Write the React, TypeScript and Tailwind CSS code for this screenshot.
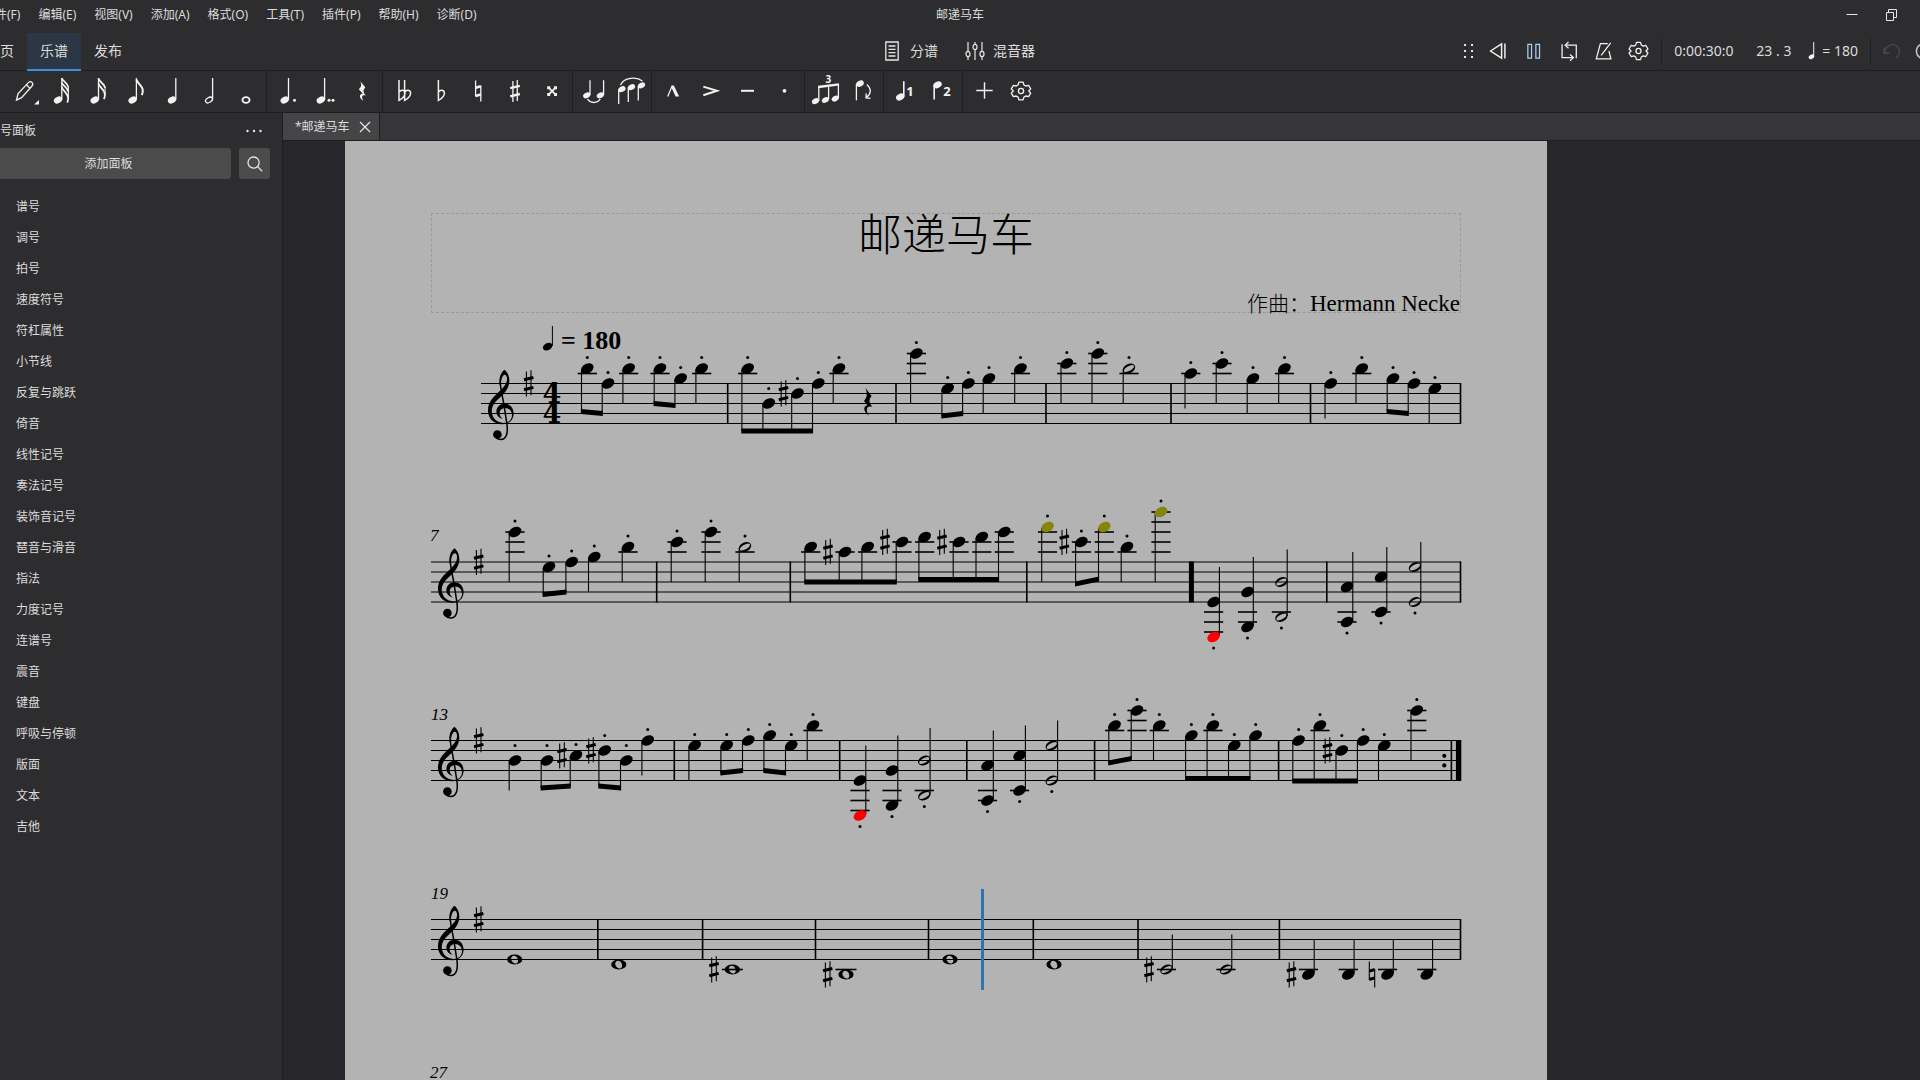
import type { ReactNode } from "react";
import clsx from "clsx";

const menus = [
  "件(F)",
  "编辑(E)",
  "视图(V)",
  "添加(A)",
  "格式(O)",
  "工具(T)",
  "插件(P)",
  "帮助(H)",
  "诊断(D)",
];

const palettes = [
  "谱号",
  "调号",
  "拍号",
  "速度符号",
  "符杠属性",
  "小节线",
  "反复与跳跃",
  "倚音",
  "线性记号",
  "奏法记号",
  "装饰音记号",
  "琶音与滑音",
  "指法",
  "力度记号",
  "连谱号",
  "震音",
  "键盘",
  "呼吸与停顿",
  "版面",
  "文本",
  "吉他",
];

/* ---------- toolbar icons, all on a 36x36 grid ---------- */

function Icon({ children }: { children: ReactNode }) {
  return (
    <svg
      viewBox="0 0 36 36"
      className="size-9"
      fill="none"
      stroke="#f2f2f2"
      strokeWidth="1.3"
      aria-hidden="true"
    >
      {children}
    </svg>
  );
}

function Blob({ x, y, r = 4.4 }: { x: number; y: number; r?: number }) {
  return (
    <ellipse
      cx={x}
      cy={y}
      rx={r}
      ry={r * 0.72}
      transform={`rotate(-28 ${x} ${y})`}
      fill="#f2f2f2"
      stroke="none"
    />
  );
}

// Closing flag of a stem; shorter ones are stacked above it.
const flag = (x: number, y: number) =>
  `M${x} ${y}c.6 3.6 6.2 6 6.4 11 0 1.800-.4 3.400-1 4.600`;

const shortFlag = (x: number, y: number) => `M${x} ${y}c.6 3.200 5.600 4.600 6.600 9.400`;

const flat = (x: number) =>
  `M${x} 7v20.4c4-2.2 6-4.4 6-7.2 0-3.6-4-4-6-1.2`;

const GEAR =
  "M15.9 9.100h4.2l.8 2.8 1.9 1.1 2.8-.7 2.1 3.6-2 2.100 2 2.100-2.1 3.6-2.8-.7-1.9 1.1-.8 2.8h-4.2l-.8-2.8-1.9-1.1-2.8.7-2.1-3.6 2-2.100-2-2.100 2.1-3.6 2.8.7 1.9-1.1z";

const gear = (
  <Icon>
    <path d={GEAR} strokeLinejoin="round" />
    <circle cx="18" cy="18" r="2.6" />
  </Icon>
);

const toolGroups: { label: string; icon: ReactNode }[][] = [
  [
    {
      label: "输入",
      icon: (
        <Icon>
          <path d="M10.5 27l1.6-6.4L22.4 9.6c1.2-1.2 2.6-1.2 3.6-.2s1 2.6-.2 3.8L15.6 24.6zM20.4 11.8l3.6 3.6" />
          <path d="M28 31.5h5v-4.5z" fill="#f2f2f2" stroke="none" />
        </Icon>
      ),
    },
    {
      label: "32分音符",
      icon: (
        <Icon>
          <Blob x={15} y={27} />
          <path d="M18.8 5v21.5" />
          <path d={`${shortFlag(18.8, 5)}${shortFlag(18.8, 9.5)}${flag(18.8, 14)}`} strokeWidth="1.7" />
          <path d="M25.4 13.5v13" strokeWidth="1" />
        </Icon>
      ),
    },
    {
      label: "16分音符",
      icon: (
        <Icon>
          <Blob x={14.7} y={27} />
          <path d="M18.5 5v21.5" />
          <path d={`${shortFlag(18.5, 5.5)}${flag(18.5, 10.5)}`} strokeWidth="1.8" />
          <path d="M25.1 14v8" strokeWidth="1" />
        </Icon>
      ),
    },
    {
      label: "8分音符",
      icon: (
        <Icon>
          <Blob x={15.6} y={27} />
          <path d="M19.4 5v21.5" />
          <path d={flag(19.4, 6.5)} strokeWidth="2" />
        </Icon>
      ),
    },
    {
      label: "4分音符",
      icon: (
        <Icon>
          <Blob x={18} y={27} />
          <path d="M21.8 5v21.5" />
        </Icon>
      ),
    },
    {
      label: "2分音符",
      icon: (
        <Icon>
          <ellipse cx="18" cy="27" rx="3.8" ry="2.4" transform="rotate(-32 18 27)" />
          <path d="M21.6 5v20.8" />
        </Icon>
      ),
    },
    {
      label: "全音符",
      icon: (
        <Icon>
          <ellipse cx="18" cy="27" rx="3.6" ry="2.8" strokeWidth="1.8" />
        </Icon>
      ),
    },
  ],
  [
    {
      label: "附点",
      icon: (
        <Icon>
          <Blob x={14.7} y={27} />
          <path d="M18.5 5v21.5" />
          <circle cx="24.5" cy="27.3" r="1.5" fill="#f2f2f2" stroke="none" />
        </Icon>
      ),
    },
    {
      label: "双附点",
      icon: (
        <Icon>
          <Blob x={13.8} y={27} />
          <path d="M17.6 5v21.5" />
          <circle cx="22" cy="27.3" r="1.5" fill="#f2f2f2" stroke="none" />
          <circle cx="26" cy="27.3" r="1.5" fill="#f2f2f2" stroke="none" />
        </Icon>
      ),
    },
    {
      label: "休止符",
      icon: (
        <Icon>
          <path
            d="M16.2 8l5.2 6.4c-2.6 2.4-2.6 4.6.4 8-3.4-1-5 1-2.4 5.4-4.6-2.6-4.4-6.8-.6-7l-4-4.6c2.8-2.6 3-4.4 1.4-8.2z"
            fill="#f2f2f2"
            stroke="none"
          />
        </Icon>
      ),
    },
  ],
  [
    {
      label: "重降号",
      icon: (
        <Icon>
          <path d={`${flat(13)}${flat(18.6)}`} strokeWidth="1.5" />
        </Icon>
      ),
    },
    {
      label: "降号",
      icon: (
        <Icon>
          <path d={flat(15.4)} strokeWidth="1.5" />
        </Icon>
      ),
    },
    {
      label: "还原号",
      icon: (
        <Icon>
          <path d="M15.6 7.5v16M20.8 12.6v16" />
          <path d="M15.6 14.8l5.2-1.6M15.6 23l5.2-1.6" strokeWidth="2.6" />
        </Icon>
      ),
    },
    {
      label: "升号",
      icon: (
        <Icon>
          <path d="M15.9 8v21M20.3 7v21" />
          <path d="M13.2 15.2l9.6-2.4M13.2 23.4l9.6-2.4" strokeWidth="2.4" />
        </Icon>
      ),
    },
    {
      label: "重升号",
      icon: (
        <Icon>
          <path d="M14.4 14.4l7.4 7.4M21.8 14.4l-7.4 7.4" strokeWidth="1.8" />
          <path d="M13.2 13.2h3v3h-3zM20 13.2h3v3h-3zM13.2 20h3v3h-3zM20 20h3v3h-3z" fill="#f2f2f2" stroke="none" />
        </Icon>
      ),
    },
  ],
  [
    {
      label: "延音线",
      icon: (
        <Icon>
          <Blob x={10.7} y={22.3} r={3.8} />
          <Blob x={24.3} y={22.3} r={3.8} />
          <path d="M14 7.3v14.6M27.6 7.3v14.6" />
          <path d="M11.5 26.2c3 4.4 9.6 4.4 12.8 0" />
        </Icon>
      ),
    },
    {
      label: "连音线",
      icon: (
        <Icon>
          <Blob x={8.9} y={16.2} r={3.8} />
          <Blob x={18.5} y={14.2} r={3.8} />
          <Blob x={28.5} y={12.4} r={3.8} />
          <path d="M5.7 16.5V31M15.3 14.5V29M25.3 13v14.5" />
          <path d="M7.5 12C11 4.4 23.5 3.4 29.4 8" />
        </Icon>
      ),
    },
  ],
  [
    {
      label: "强音",
      icon: (
        <Icon>
          <path d="M12 23.4l4.6-10.8h2.2l5.4 10.8h-3.6l-3.8-8.2-3.4 8.2z" fill="#f2f2f2" stroke="none" />
        </Icon>
      ),
    },
    {
      label: "重音",
      icon: (
        <Icon>
          <path d="M11.3 13.6L25 17.8l-13.7 4.4" strokeWidth="2" />
        </Icon>
      ),
    },
    {
      label: "保持音",
      icon: (
        <Icon>
          <path d="M12 17.8h13" strokeWidth="2" />
        </Icon>
      ),
    },
    {
      label: "跳音",
      icon: (
        <Icon>
          <circle cx="18.500" cy="17.8" r="1.900" fill="#f2f2f2" stroke="none" />
        </Icon>
      ),
    },
  ],
  [
    {
      label: "连音符",
      icon: (
        <Icon>
          <Blob x={7.4} y={28.2} r={3.7} />
          <Blob x={17.3} y={27} r={3.7} />
          <Blob x={27.2} y={25.6} r={3.7} />
          <path d="M10.8 13.5v14.4M20.6 13v13.6M30.4 11v14.2" />
          <path d="M10.2 14l20.8-2.6" strokeWidth="2.4" />
          <text
            x="20.4"
            y="10"
            textAnchor="middle"
            className="font-['Noto_Sans'] text-[10px] font-bold"
            fill="#f2f2f2"
            stroke="none"
          >
            3
          </text>
        </Icon>
      ),
    },
    {
      label: "翻转方向",
      icon: (
        <Icon>
          <Blob x={15} y={10.6} r={4} />
          <path d="M11.4 11v16.4" />
          <path d="M21.8 11.4c4.8 4 4.6 9.2-.4 13.2M25.6 25.4l-4.6-.4.2-4.6" />
        </Icon>
      ),
    },
  ],
  [
    {
      label: "声部 1",
      icon: (
        <Icon>
          <Blob x={13.2} y={24} />
          <path d="M16.8 8.3v15.4" strokeWidth="1.6" />
          <text x="23" y="22.6" textAnchor="middle" className="font-['Noto_Sans'] text-[13px] font-bold" fill="#f2f2f2" stroke="none">
            1
          </text>
        </Icon>
      ),
    },
    {
      label: "声部 2",
      icon: (
        <Icon>
          <Blob x={13.6} y={11.8} />
          <path d="M10.2 12v14.6" strokeWidth="1.6" />
          <text x="23" y="22.6" textAnchor="middle" className="font-['Noto_Sans'] text-[13px] font-bold" fill="#f2f2f2" stroke="none">
            2
          </text>
        </Icon>
      ),
    },
  ],
  [
    {
      label: "添加",
      icon: (
        <Icon>
          <path d="M10.300 17.500h16.4M18.5 9.300v16.4" strokeWidth="1.4" />
        </Icon>
      ),
    },
    { label: "自定义工具栏", icon: gear },
  ],
];

const playback = [
  {
    label: "回到开头",
    icon: (
      <Icon>
        <path d="M9.8 18l11.4-7.4v14.8zM24.6 10.4v15.2" strokeWidth="1.5" />
      </Icon>
    ),
  },
  {
    label: "暂停",
    icon: (
      <Icon>
        <path d="M12.2 11.2h3.8v14.2h-3.8zM20.4 11.2h3.8v14.2h-3.8z" stroke="#a9cdec" />
      </Icon>
    ),
  },
  {
    label: "循环播放",
    icon: (
      <Icon>
        <path d="M11.400 11v13.800h11.4M15.4 12h10.600v13.400" />
        <path d="M18 8.8L14.6 12l3.4 3.2M19.6 21.6l3.4 3.2-3.4 3.2" />
      </Icon>
    ),
  },
  {
    label: "节拍器",
    icon: (
      <Icon>
        <path d="M22.4 10.4h-7.6L10.6 26h15l-2-8M15.6 22.4L25.4 9.6" />
      </Icon>
    ),
  },
  { label: "播放设置", icon: gear },
];

/* ---------- score data ---------- */

// A step counts half spaces down from the top staff line.
type Tone = [x: number, step: number];
type Beam = { from: number; to: number; tones: Tone[]; plain?: boolean };
type System = {
  number?: number;
  numberX: number;
  left: number;
  top: number;
  bars: number[];
  beams: Beam[];
  quarters: Tone[];
  halves: Tone[];
  wholes?: Tone[];
  chords?: { x: number; steps: [number, number]; half?: boolean }[];
  sharps: Tone[];
  naturals?: Tone[];
  plain?: boolean;
};

const RIGHT = 1461;

const systems: System[] = [
  {
    numberX: 431,
    left: 481,
    top: 383.5,
    bars: [727.7, 896, 1046, 1171, 1310.5, 1460.5],
    beams: [
      { from: 28, to: 30, tones: [[587.3, -3], [608, 0]] },
      { from: 20, to: 22, tones: [[660, -3], [680.7, -1]] },
      { from: 47.5, to: 47.5, tones: [[747.7, -3], [768.7, 4], [797.5, 2], [818.3, 0]] },
      { from: 32.5, to: 30, tones: [[947.7, 1], [968.4, 0]] },
      { from: 28, to: 30, tones: [[1393, -1], [1414, 0]] },
    ],
    quarters: [
      [628.7, -3], [701.7, -3], [839, -3], [916.4, -6], [989, -1], [1020.5, -3],
      [1066.8, -4], [1097.8, -6], [1190.8, -2], [1222, -4], [1253, -1], [1284.5, -3],
      [1330.8, 0], [1361.8, -3], [1435, 1],
    ],
    halves: [[1129, -3]],
    sharps: [[783.5, 2]],
  },
  {
    number: 7,
    numberX: 430,
    left: 431,
    top: 562,
    bars: [656.7, 790.3, 1026.8, 1326.8, 1460.5],
    beams: [
      { from: 32.5, to: 30, tones: [[549, 1], [571.7, 0]] },
      { from: 20, to: 20, tones: [[810.7, -3], [845, -2], [867.7, -3], [902, -4]], plain: true },
      { from: 17.5, to: 17.5, tones: [[924.7, -5], [959, -4], [981.8, -5], [1004.3, -6]], plain: true },
      { from: 22, to: 17, tones: [[1081.4, -4], [1104.3, -7]] },
    ],
    quarters: [
      [515, -6], [594.3, -1], [628, -3], [677, -4], [711, -6], [1047.5, -7], [1127, -3], [1161, -10],
    ],
    halves: [[745, -3]],
    chords: [
      { x: 1213.6, steps: [8, 15] },
      { x: 1247.5, steps: [6, 13] },
      { x: 1281.4, steps: [4, 11], half: true },
      { x: 1347, steps: [5, 12] },
      { x: 1381, steps: [3, 10] },
      { x: 1415, steps: [1, 8], half: true },
    ],
    sharps: [[828, -2], [885, -4], [942, -4], [1064.3, -4]],
  },
  {
    number: 13,
    numberX: 431,
    left: 431,
    top: 740.5,
    bars: [674.3, 839.7, 966.8, 1094.6, 1278.6],
    beams: [
      { from: 47.5, to: 45.5, tones: [[547, 4], [576, 3]] },
      { from: 45.5, to: 47.5, tones: [[604.7, 2], [626.3, 4]] },
      { from: 32.5, to: 30, tones: [[726.7, 1], [748.3, 0]] },
      { from: 30, to: 32.5, tones: [[769.7, -1], [791.3, 1]] },
      { from: 22.5, to: 18, tones: [[1114.6, -3], [1137, -6]] },
      { from: 38, to: 38, tones: [[1191.4, -1], [1212.9, -3], [1234.3, 1], [1255.7, -1]] },
      { from: 40.5, to: 40.5, tones: [[1298.6, 0], [1320, -3], [1341.8, 2], [1363.2, 0]] },
    ],
    quarters: [[515, 4], [647.7, 0], [694.7, 1], [813, -3], [1159.3, -3], [1384.3, 1], [1416.8, -6]],
    halves: [],
    chords: [
      { x: 860, steps: [8, 15] },
      { x: 892, steps: [6, 13] },
      { x: 924.3, steps: [4, 11], half: true },
      { x: 987.5, steps: [5, 12] },
      { x: 1019.6, steps: [3, 10] },
      { x: 1051.8, steps: [1, 8], half: true },
    ],
    sharps: [[562, 3], [591, 2], [1327.5, 2]],
  },
  {
    number: 19,
    numberX: 431,
    left: 431,
    top: 919.5,
    bars: [597.8, 702.6, 815.5, 928.5, 1033.3, 1138, 1279.4, 1460.5],
    beams: [],
    quarters: [[1308.4, 11], [1348.3, 11], [1387.5, 11], [1426.8, 11]],
    halves: [[1166.5, 10], [1226, 10]],
    wholes: [[514.7, 8], [618.8, 9], [732.4, 10], [846, 11], [950, 8], [1054, 9]],
    sharps: [[714, 10], [827.7, 11], [1149, 10], [1291.5, 11]],
    naturals: [[1372, 11]],
    plain: true,
  },
];

// Out of a player's comfortable range is olive, out of any range is red.
function toneColor(step: number) {
  if (step >= 15) return "#ff0000";
  if (step <= -7) return "#85850a";
  return "#000";
}

function Head({ x, y, color = "#000" }: { x: number; y: number; color?: string }) {
  return <ellipse cx={x} cy={y} rx={6.7} ry={4.7} transform={`rotate(-28 ${x} ${y})`} fill={color} />;
}

function HalfHead({ x, y }: { x: number; y: number }) {
  return (
    <path
      fillRule="evenodd"
      transform={`translate(${x} ${y}) rotate(-28)`}
      d="M-6.6 0a6.6 4.6 0 1 0 13.2 0a6.6 4.6 0 1 0-13.2 0zM-5.6.3a5.6 2.3 0 1 1 11.2-.6a5.6 2.3 0 1 1-11.2.6z"
    />
  );
}

function WholeHead({ x, y }: { x: number; y: number }) {
  return (
    <path
      fillRule="evenodd"
      transform={`translate(${x} ${y})`}
      d="M-7.6 0a7.6 5 0 1 0 15.2 0a7.6 5 0 1 0-15.2 0zM-3-2.6c1.6-2.2 5-1 6 1.8.9 2.4.2 4.2-1.4 4.7-2 .5-4.3-1.2-5-3.4-.4-1.2-.2-2.3.4-3.1z"
    />
  );
}

function Sharp({ x, y }: { x: number; y: number }) {
  return (
    <g transform={`translate(${x} ${y})`} stroke="#000">
      <path d="M-2.3-12v25M2.3-13.2v25" strokeWidth="1.1" />
      <path d="M-4.7-3.7l9.4-2.3M-4.7 6.2l9.4-2.3" strokeWidth="3" />
    </g>
  );
}

function Natural({ x, y }: { x: number; y: number }) {
  return (
    <g transform={`translate(${x} ${y})`} stroke="#000">
      <path d="M-2.7-13v18.6M2.7-5.6v18.6" strokeWidth="1.1" />
      <path d="M-2.7-3.4l5.4-1.6M-2.7 5l5.4-1.6" strokeWidth="3" />
    </g>
  );
}

function Ledgers({ x, y, step, wide }: { x: number; y: number; step: number; wide?: boolean }) {
  const lines: number[] = [];
  for (let s = -2; s >= step; s -= 2) lines.push(s);
  for (let s = 10; s <= step; s += 2) lines.push(s);
  const half = wide ? 10.5 : 9.6;
  return (
    <>
      {lines.map((s) => (
        <path key={s} d={`M${x - half} ${y + s * 5}h${half * 2}`} stroke="#000" strokeWidth="1.6" />
      ))}
    </>
  );
}

function Dot({ x, y }: { x: number; y: number }) {
  return <circle cx={x} cy={y} r="1.5" />;
}

function Staccato({ x, y, step }: { x: number; y: number; step: number }) {
  const inSpace = step >= 2 && step % 2 === 0;
  return <Dot x={x} y={y + step * 5 - (inSpace ? 15 : 11)} />;
}

function Clef({ x, y }: { x: number; y: number }) {
  return (
    <g transform={`translate(${x} ${y})`}>
      <path d="M23.5-13.7C26.6-11 28.6-7 28.3-2 27.8 6 22.6 11 17.4 15.6 12.4 20 10.6 24 10.8 28.6 11.3 34.8 16 39.4 22.5 39.4c5.4 0 8.5-3.2 8.5-7.8 0-4.2-3-7.2-6.8-7.2-3.4 0-5.6 2.4-5.6 5.4 0 2.6 1.2 4.4 3.4 5.6-4-.6-6.6-3.6-6.6-7.2 0-4.6 3.6-8 8.2-8 5.4 0 9 4.4 9 9.8 0 6.6-4.6 10.8-11.2 10.8C13 40.8 7 35 7 27c0-7.8 4.2-12.2 9.6-17.4C21.2 5.2 25.6 1.4 26-4c.2-2.8-.8-4.8-2.2-4.8-2.4.2-4 5.2-3.6 9.8l-1.8.2C17.8-5 19.6-10.8 23.5-13.7z" />
      <path
        d="M19.3 0c.6 7 2.4 14 3.6 21l3 19.4C27 48.6 26 56 19.6 56c-1.8 0-3.2-.6-4.2-1.6"
        fill="none"
        stroke="#000"
        strokeWidth="1.5"
      />
      <circle cx="16.4" cy="51" r="4.3" />
    </g>
  );
}

function QuarterRest({ x, y }: { x: number; y: number }) {
  return (
    <path
      transform={`translate(${x} ${y})`}
      d="M-2.6-15.4L3.6-7.4C.6-3.6.8-1 4.2 3.2-.8 1.8-3 5 .8 12.2-5 8-4.8 2.6-.6 1.8L-4-2.6C-.6-6.2-.4-9.6-2.6-15.4z"
    />
  );
}

function BeamGroup({ beam, top }: { beam: Beam; top: number }) {
  const x1 = beam.tones[0][0] - 5.8;
  const x2 = beam.tones[beam.tones.length - 1][0] - 5.8;
  const a = top + beam.from;
  const b = top + beam.to;
  return (
    <g>
      <path d={`M${x1 - 0.6} ${a - 2.4}L${x2 + 0.6} ${b - 2.4}v4.8L${x1 - 0.6} ${a + 2.4}z`} />
      {beam.tones.map(([x, step]) => {
        const sx = x - 5.8;
        const end = a + ((sx - x1) / (x2 - x1)) * (b - a);
        return (
          <g key={x}>
            <Ledgers x={x} y={top} step={step} />
            <path d={`M${sx} ${top + step * 5 + 1}V${end}`} stroke="#000" strokeWidth="1.1" />
            <Head x={x} y={top + step * 5} color={toneColor(step)} />
            {!beam.plain && <Staccato x={x} y={top} step={step} />}
          </g>
        );
      })}
    </g>
  );
}

function StemmedTone({ tone, top, half, plain }: { tone: Tone; top: number; half?: boolean; plain?: boolean }) {
  const [x, step] = tone;
  const up = step > 4;
  const y = top + step * 5;
  const end = up
    ? top + Math.min(step * 5 - 35, 20)
    : top + Math.max(step * 5 + (step === 4 ? 30 : 35), 20);
  return (
    <g>
      <Ledgers x={x} y={top} step={step} />
      <path d={`M${up ? x + 5.8 : x - 5.8} ${up ? y - 1 : y + 1}V${end}`} stroke="#000" strokeWidth="1.1" />
      {half ? <HalfHead x={x} y={y} /> : <Head x={x} y={y} color={toneColor(step)} />}
      {!plain && <Staccato x={x} y={top} step={step} />}
    </g>
  );
}

function StaffSystem({ system }: { system: System }) {
  const { top, left, number } = system;
  const bottom = top + 40;
  return (
    <g>
      {[0, 10, 20, 30, 40].map((dy) => (
        <path key={dy} d={`M${left} ${top + dy}H${RIGHT}`} stroke="#000" strokeWidth="1.1" />
      ))}
      {number && (
        <text
          x={system.numberX}
          y={top - 21}
          className="font-['Liberation_Serif',serif] text-[17px] italic"
        >
          {number}
        </text>
      )}
      <Clef x={left} y={top} />
      <Sharp x={left + 47.7} y={top} />
      {system.bars.map((x) => (
        <path key={x} d={`M${x} ${top - 0.5}V${bottom + 0.5}`} stroke="#000" strokeWidth="1.6" />
      ))}
      {system.beams.map((beam) => (
        <BeamGroup key={beam.tones[0][0]} beam={beam} top={top} />
      ))}
      {system.quarters.map((tone) => (
        <StemmedTone key={tone[0]} tone={tone} top={top} plain={system.plain} />
      ))}
      {system.halves.map((tone) => (
        <StemmedTone key={tone[0]} tone={tone} top={top} half plain={system.plain} />
      ))}
      {system.wholes?.map(([x, step]) => (
        <g key={x}>
          <Ledgers x={x} y={top} step={step} wide />
          <WholeHead x={x} y={top + step * 5} />
        </g>
      ))}
      {system.chords?.map(({ x, steps: [high, low], half }) => {
        const stemTop = top + high * 5 - Math.min(35, 22.5 + high * 2.5);
        return (
          <g key={x}>
            <Ledgers x={x} y={top} step={low} />
            <path d={`M${x + 5.8} ${top + low * 5 - 1}V${stemTop}`} stroke="#000" strokeWidth="1.1" />
            {[high, low].map((step) =>
              half ? (
                <HalfHead key={step} x={x} y={top + step * 5} />
              ) : (
                <Head key={step} x={x} y={top + step * 5} color={toneColor(step)} />
              ),
            )}
            <Dot x={x} y={top + low * 5 + 11} />
          </g>
        );
      })}
      {system.sharps.map(([x, step]) => (
        <Sharp key={x} x={x} y={top + step * 5} />
      ))}
      {system.naturals?.map(([x, step]) => (
        <Natural key={x} x={x} y={top + step * 5} />
      ))}
    </g>
  );
}

function Score() {
  return (
    <svg viewBox="345 313 1202 780" className="block w-full" role="img" aria-label="邮递马车">
      {/* tempo */}
      <g>
        <ellipse cx="547.6" cy="346.6" rx="5" ry="3.5" transform="rotate(-28 547.6 346.6)" />
        <path d="M552.4 346V326" stroke="#000" strokeWidth="1" />
        <text x="561" y="349" className="font-['Liberation_Serif',serif] text-[26px] font-bold">
          = 180
        </text>
      </g>
      {systems.map((system) => (
        <StaffSystem key={system.top} system={system} />
      ))}
      {/* time signature */}
      <g
        className="font-['DejaVu_Serif',serif] text-[27px] font-bold"
        textAnchor="middle"
      >
        <text x="552" y="403">4</text>
        <text x="552" y="423">4</text>
      </g>
      <QuarterRest x={868} y={403.5} />
      {/* final section barline, then the closing repeat */}
      <path d="M1191.4 561.5V602.5" stroke="#000" strokeWidth="5" />
      <circle cx="1444.3" cy="755.8" r="2.1" />
      <circle cx="1444.3" cy="765.4" r="2.1" />
      <path d="M1451.4 740V781" stroke="#000" strokeWidth="1.6" />
      <path d="M1458.6 740V781" stroke="#000" strokeWidth="5.4" />
      <text x="430" y="1078" className="font-['Liberation_Serif',serif] text-[17px] italic">
        27
      </text>
      {/* playback cursor */}
      <rect x="981" y="889" width="3" height="101" fill="#2f74b0" />
    </svg>
  );
}

/* ---------- window chrome ---------- */

function MenuBar() {
  return (
    <header className="grid h-[33px] grid-cols-[1fr_auto_1fr] items-center pb-[3px] text-[12px] leading-4">
      <nav className="-ml-[5px] flex gap-[18px] overflow-hidden whitespace-nowrap">
        {menus.map((menu) => (
          <button key={menu} type="button">
            {menu}
          </button>
        ))}
      </nav>
      <div>邮递马车</div>
      <div className="flex justify-end">
        <button type="button" aria-label="最小化" className="flex w-[39px] justify-center">
          <svg viewBox="0 0 12 12" className="size-3" stroke="#e6e6e6" aria-hidden="true">
            <path d="M.5 5.5h11" />
          </svg>
        </button>
        <button type="button" aria-label="还原" className="mr-2 flex w-[41px] justify-center">
          <svg viewBox="0 0 12 12" className="size-3" fill="none" stroke="#e6e6e6" aria-hidden="true">
            <path d="M.5 3.5h7v8h-7zM2.5 3.5v-3h8v8h-3" />
          </svg>
        </button>
      </div>
    </header>
  );
}

function ModeBar() {
  return (
    <div className="grid h-[38px] grid-cols-[1fr_auto_1fr] border-b border-[#1e1e20] text-[14px] leading-5">
      <nav className="flex">
        <a href="#home" className="flex items-center pb-[2px] pr-[13px]">
          页
        </a>
        <a
          href="#score"
          aria-current="page"
          className="flex items-center border-b-2 border-[#3f8fd8] bg-[#2b3744] px-[13px]"
        >
          乐谱
        </a>
        <a href="#publish" className="flex items-center px-[13px] pb-[2px]">
          发布
        </a>
      </nav>
      <div className="flex items-center gap-[27px] pb-[2px]">
        <button type="button" className="flex items-center gap-[11px]">
          <svg viewBox="0 0 14 20" className="h-5 w-[14px]" fill="none" stroke="#e6e6e6" strokeWidth="1.3" aria-hidden="true">
            <path d="M.8 1h12.4v18H.8zM3.5 5h7M3.5 8.3h7M3.5 11.6h7M3.5 15h7" />
          </svg>
          分谱
        </button>
        <button type="button" className="flex items-center gap-[8px]">
          <svg viewBox="0 0 20 20" className="size-5" fill="none" stroke="#e6e6e6" strokeWidth="1.2" aria-hidden="true">
            <path d="M3 1v9M3 16v3M10 1v2M10 9v10M17 1v9M17 16v3" />
            <ellipse cx="3" cy="13" rx="2" ry="2.7" />
            <ellipse cx="10" cy="6" rx="2" ry="2.7" />
            <ellipse cx="17" cy="13" rx="2" ry="2.7" />
          </svg>
          混音器
        </button>
      </div>
      <div className="flex items-center justify-end pb-[2px]">
        <svg viewBox="0 0 12 16" className="mr-[6px] h-4 w-3" fill="#e6e6e6" aria-hidden="true">
          <path d="M1 1h2v2H1zM8 1h2v2H8zM1 7h2v2H1zM8 7h2v2H8zM1 13h2v2H1zM8 13h2v2H8z" />
        </svg>
        {playback.map((item, i) => (
          <button
            key={item.label}
            type="button"
            aria-label={item.label}
            className={clsx("flex w-[35px] justify-center", i === playback.length - 1 && "mr-[5px]")}
          >
            {item.icon}
          </button>
        ))}
        <div className="flex h-[27px] items-center border-x border-[#202022] px-3">
          <span className="w-[82px]">0:00:30:0</span>
          <span className="w-[52px]">23 . 3</span>
          <svg viewBox="0 0 8 20" className="mr-[6px] h-5 w-2" fill="#f2f2f2" aria-hidden="true">
            <ellipse cx="3.4" cy="15.8" rx="2.9" ry="2.1" transform="rotate(-28 3.4 15.8)" />
            <path d="M5.2 1h1v14.4h-1z" />
          </svg>
          <span>= 180</span>
        </div>
        <button type="button" aria-label="撤销" className="ml-[11px]">
          <svg viewBox="0 0 20 20" className="size-5" fill="none" stroke="#48484b" strokeWidth="1.4" aria-hidden="true">
            <path d="M2 6.6v5.6h5.4M2.6 11.4C4 5 9 2.4 13.4 4.2c5 2.2 5.6 9.4.4 12.6" />
          </svg>
        </button>
        <button type="button" aria-label="重做" className="ml-3 w-[6px] overflow-hidden">
          <svg viewBox="0 0 20 20" className="size-5 max-w-none" fill="none" stroke="#c8c8c8" strokeWidth="1.4" aria-hidden="true">
            <path d="M6.6 17C1 13.8 1 6.4 6.6 3.6c5-2 9.4.8 11 7" />
          </svg>
        </button>
      </div>
    </div>
  );
}

function NoteToolbar() {
  return (
    <div className="flex h-[42px] border-b border-[#1e1e20] pl-[3px]">
      {toolGroups.map((group, i) => (
        <div
          key={group[0].label}
          className={clsx(
            "flex items-center gap-px pb-px pl-[3px] pr-[2px]",
            i < toolGroups.length - 1 && "border-r border-[#1e1e20]",
          )}
        >
          {group.map((tool) => (
            <button key={tool.label} type="button" aria-label={tool.label} className="size-9">
              {tool.icon}
            </button>
          ))}
        </div>
      ))}
    </div>
  );
}

function PalettePanel() {
  return (
    <aside className="w-[283px] shrink-0 overflow-hidden border-r border-[#1e1e20] text-[12px] leading-4">
      <div className="flex h-[35px] items-center justify-between pr-5">
        <h2>号面板</h2>
        <button type="button" aria-label="更多">
          <svg viewBox="0 0 16 4" className="h-1 w-4" fill="#e6e6e6" aria-hidden="true">
            <circle cx="1.5" cy="2" r="1.2" />
            <circle cx="8" cy="2" r="1.2" />
            <circle cx="14.5" cy="2" r="1.2" />
          </svg>
        </button>
      </div>
      <div className="-ml-[14px] flex gap-2 pr-3">
        <button type="button" className="h-[31px] flex-1 rounded-[3px] bg-[#4b4b4c]">
          添加面板
        </button>
        <button
          type="button"
          aria-label="搜索"
          className="flex size-[31px] items-center justify-center rounded-[3px] bg-[#4b4b4c]"
        >
          <svg viewBox="0 0 16 16" className="size-4" fill="none" stroke="#e6e6e6" strokeWidth="1.3" aria-hidden="true">
            <circle cx="6.6" cy="6.6" r="5.6" />
            <path d="M10.6 10.6l4.6 4.6" />
          </svg>
        </button>
      </div>
      <ul className="pt-3">
        {palettes.map((name) => (
          <li key={name}>
            <button type="button" className="h-[31px] w-full pl-4 text-left">
              {name}
            </button>
          </li>
        ))}
      </ul>
    </aside>
  );
}

export default function App() {
  return (
    <div className="flex h-screen flex-col overflow-hidden bg-[#2d2d2f] font-['Noto_Sans','Noto_Sans_CJK_SC',sans-serif] text-[#dcdcdc]">
      <MenuBar />
      <ModeBar />
      <NoteToolbar />
      <div className="flex min-h-0 flex-1">
        <PalettePanel />
        <main className="flex min-w-0 flex-1 flex-col">
          <div className="flex h-7 shrink-0 border-b border-[#1e1e20] bg-[#363638]">
            <div className="flex items-center gap-[9px] border-r border-[#1e1e20] bg-[#454547] pl-3 pr-2 text-[12px] leading-4">
              <span>*邮递马车</span>
              <button type="button" aria-label="关闭">
                <svg viewBox="0 0 12 12" className="size-3" stroke="#e6e6e6" strokeWidth="1.2" aria-hidden="true">
                  <path d="M1 1l10 10M11 1L1 11" />
                </svg>
              </button>
            </div>
          </div>
          <div className="flex-1 overflow-hidden bg-[#27272b] pl-[62px]">
            <article className="w-[1202px] bg-[#b3b3b3] pt-[72px] text-black">
              <div className="mx-[86px] flex h-[100px] flex-col justify-between border border-dashed border-[#9a9a9a]">
                <h1 className="text-center font-['Noto_Sans_CJK_SC',sans-serif] text-[44px] font-light leading-9">
                  邮递马车
                </h1>
                <p className="text-right font-['Liberation_Serif','Noto_Sans_CJK_SC',serif] text-[23px] leading-4">
                  <span className="text-[21px] font-light">作曲：</span>
                  Hermann Necke
                </p>
              </div>
              <Score />
            </article>
          </div>
        </main>
      </div>
    </div>
  );
}
